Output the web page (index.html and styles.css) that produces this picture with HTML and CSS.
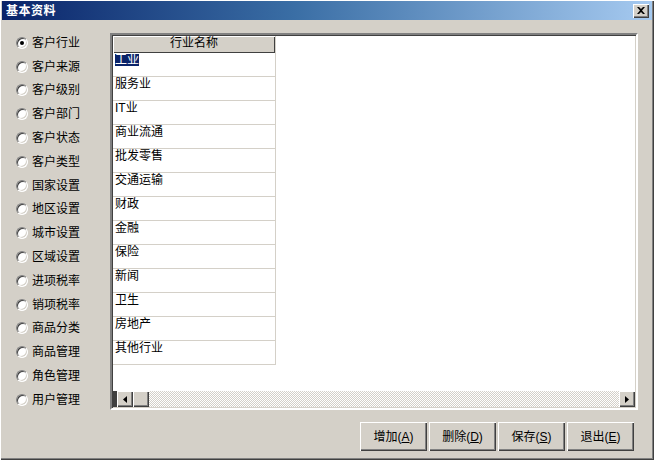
FILE: index.html
```html
<!DOCTYPE html>
<html lang="zh-CN">
<head>
<meta charset="utf-8">
<title>基本资料</title>
<link rel="stylesheet" href="styles.css">
</head>
<body>
<div class="window">
  <div class="titlebar">
    <span class="title">基本资料</span>
    <span class="close"><svg width="8" height="7" viewBox="0 0 8 7"><path d="M0 0h2l2 2 2-2h2L5 3.5 8 7H6L4 5 2 7H0l3-3.5z" fill="#000"/></svg></span>
  </div>
  <div class="main">
    <ul class="options">
      <li class="opt checked"><span class="radio"></span>客户行业</li>
      <li class="opt"><span class="radio"></span>客户来源</li>
      <li class="opt"><span class="radio"></span>客户级别</li>
      <li class="opt"><span class="radio"></span>客户部门</li>
      <li class="opt"><span class="radio"></span>客户状态</li>
      <li class="opt"><span class="radio"></span>客户类型</li>
      <li class="opt"><span class="radio"></span>国家设置</li>
      <li class="opt"><span class="radio"></span>地区设置</li>
      <li class="opt"><span class="radio"></span>城市设置</li>
      <li class="opt"><span class="radio"></span>区域设置</li>
      <li class="opt"><span class="radio"></span>进项税率</li>
      <li class="opt"><span class="radio"></span>销项税率</li>
      <li class="opt"><span class="radio"></span>商品分类</li>
      <li class="opt"><span class="radio"></span>商品管理</li>
      <li class="opt"><span class="radio"></span>角色管理</li>
      <li class="opt"><span class="radio"></span>用户管理</li>
    </ul>
    <div class="panel">
      <div class="grid">
        <div class="col">
          <div class="head">行业名称</div>
          <div class="row"><span class="sel">工业</span></div>
          <div class="row">服务业</div>
          <div class="row">IT业</div>
          <div class="row">商业流通</div>
          <div class="row">批发零售</div>
          <div class="row">交通运输</div>
          <div class="row">财政</div>
          <div class="row">金融</div>
          <div class="row">保险</div>
          <div class="row">新闻</div>
          <div class="row">卫生</div>
          <div class="row">房地产</div>
          <div class="row">其他行业</div>
        </div>
      </div>
      <div class="hscroll">
        <span class="edge"></span>
        <span class="sbtn"><svg width="4" height="7" viewBox="0 0 4 7"><path d="M4 0v7L0 3.5z" fill="#000"/></svg></span>
        <span class="thumb"></span>
        <span class="track"></span>
        <span class="sbtn"><svg width="4" height="7" viewBox="0 0 4 7"><path d="M0 0v7l4-3.5z" fill="#000"/></svg></span>
      </div>
    </div>
  </div>
  <div class="buttons">
    <button class="btn">增加(<u>A</u>)</button>
    <button class="btn">删除(<u>D</u>)</button>
    <button class="btn">保存(<u>S</u>)</button>
    <button class="btn">退出(<u>E</u>)</button>
  </div>
</div>
</body>
</html>
```
FILE: styles.css
```css
* { box-sizing: border-box; }
html, body { margin: 0; padding: 0; }
body {
  width: 654px;
  height: 460px;
  background: #d4d0c8;
  font-family: "Liberation Sans", "Noto Sans CJK SC", sans-serif;
  font-size: 12px;
  color: #000;
  overflow: hidden;
}
.window {
  width: 654px;
  height: 460px;
  padding: 1px 2px 2px 2px;
  display: flex;
  flex-direction: column;
  background: #d4d0c8;
  box-shadow: inset 1px 1px 0 #ffffff, inset -1px -1px 0 #404040, inset -2px -2px 0 #808080;
}
.titlebar {
  height: 19px;
  display: flex;
  align-items: center;
  justify-content: space-between;
  padding: 0 3px 0 4px;
  background: linear-gradient(to right, #0a246a 0%, #3a6ea5 45%, #a6caf0 100%);
}
.title {
  color: #fff;
  font-weight: bold;
  font-size: 12px;
  line-height: 14px;
  letter-spacing: 0.5px;
}
.close {
  width: 16px;
  height: 14px;
  display: flex;
  align-items: center;
  justify-content: center;
  background: #d4d0c8;
  box-shadow: inset 1px 1px 0 #ffffff, inset -1px -1px 0 #404040, inset -2px -2px 0 #808080;
}
.main {
  display: flex;
  height: 390px;
}
.options {
  list-style: none;
  margin: 0;
  padding: 11px 0 0 14px;
  width: 108px;
}
.opt {
  height: 23.8px;
  display: flex;
  align-items: center;
  line-height: 14px;
  white-space: nowrap;
}
.radio {
  width: 12px;
  height: 12px;
  border-radius: 50%;
  margin-right: 4px;
  background: #fff;
  border: 1px solid;
  border-color: #808080 #ffffff #ffffff #808080;
  box-shadow: inset 1px 1px 0 #404040, inset -1px -1px 0 #d4d0c8;
  position: relative;
  flex: none;
}
.checked .radio::after {
  content: "";
  position: absolute;
  left: 3px;
  top: 3px;
  width: 4px;
  height: 4px;
  border-radius: 50%;
  background: #000;
}
.panel {
  margin-top: 13px;
  width: 528px;
  height: 377px;
  background: #fff;
  border: 2px solid;
  border-color: #808080 #ffffff #ffffff #808080;
  box-shadow: inset 1px 1px 0 #404040, inset -1px -1px 0 #d4d0c8;
  padding: 1px 1px 1px 1px;
  display: flex;
  flex-direction: column;
}
.grid {
  flex: 1;
  display: flex;
}
.col {
  width: 163px;
  border-right: 1px solid #d4d0c8;
  align-self: flex-start;
}
.head {
  height: 17px;
  line-height: 14px;
  text-align: center;
  background: #d4d0c8;
  box-shadow: inset 1px 1px 0 #ffffff, inset -1px -1px 0 #404040;
}
.row {
  height: 24px;
  border-bottom: 1px solid #d4d0c8;
  padding: 1px 0 0 2px;
  line-height: 12px;
}
.sel {
  background: #0a246a;
  color: #fff;
  display: inline-block;
  height: 12px;
  line-height: 12px;
  outline: 1px dotted #fff;
}
.hscroll {
  height: 16px;
  display: flex;
}
.edge {
  width: 4px;
  background: #404040;
}
.sbtn, .thumb {
  width: 16px;
  height: 16px;
  background: #d4d0c8;
  display: flex;
  align-items: center;
  justify-content: center;
  box-shadow: inset 1px 1px 0 #ffffff, inset -1px -1px 0 #404040, inset -2px -2px 0 #808080;
  flex: none;
}
.track {
  flex: 1;
  background: repeating-conic-gradient(#d4d0c8 0 25%, #ffffff 0 50%) 0 0 / 2px 2px;
}
.buttons {
  display: flex;
  justify-content: flex-end;
  gap: 2px;
  padding: 12px 18px 0 0;
}
.btn {
  width: 67px;
  height: 29px;
  margin: 0;
  padding: 0;
  font-family: "Liberation Sans", "Noto Sans CJK SC", sans-serif;
  font-size: 12px;
  line-height: 14px;
  color: #000;
  background: #d4d0c8;
  border: 0;
  box-shadow: inset 1px 1px 0 #ffffff, inset -1px -1px 0 #404040, inset -2px -2px 0 #808080;
}
.btn u { text-decoration: underline; }
```
